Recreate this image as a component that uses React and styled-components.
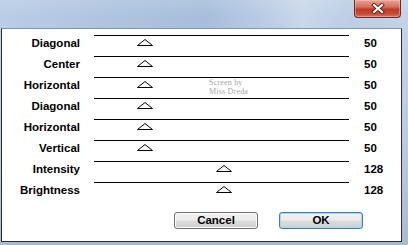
import React from "react";
import styled, { createGlobalStyle } from "styled-components";

const Global = createGlobalStyle`
  html, body { margin: 0; padding: 0; background: #ffffff; }
  body { font-family: "Liberation Sans", Arial, sans-serif; }
`;

const Window = styled.div`
  width: 408px;
  height: 245px;
  display: flex;
  flex-direction: column;
  overflow: hidden;
  background: linear-gradient(180deg, #c6d5e8 0%, #b9cbe1 60%, #a9bad0 100%);
`;

const TitleBar = styled.div`
  height: 28px;
  flex: none;
  display: flex;
  justify-content: flex-end;
  align-items: flex-start;
  padding-right: 7px;
  box-sizing: border-box;
  background:
    linear-gradient(180deg, rgba(255,255,255,0.12) 0%, rgba(255,255,255,0) 60%),
    linear-gradient(90deg, #b9cde5 0%, #afc5df 25%, #a6bedb 50%, #b5c9e2 62%, #c9d8ea 74%, #bccee5 86%, #c3d3e8 100%);
`;

const CloseButton = styled.div`
  width: 47px;
  height: 18px;
  box-sizing: border-box;
  border: 1px solid #6e2a22;
  border-top: none;
  border-radius: 0 0 4px 4px;
  background: linear-gradient(180deg, #e8a394 0%, #d7705f 40%, #c13a26 55%, #c84a33 80%, #d8745c 100%);
  display: flex;
  align-items: center;
  justify-content: center;
  box-shadow: inset 0 0 0 1px rgba(255, 200, 190, 0.45);
`;

const Frame = styled.div`
  flex: 1;
  display: flex;
  padding: 0 6px 3px 1px;
`;

const Client = styled.div`
  flex: 1;
  background: #ffffff;
  border: 1px solid #2d2d2d;
  border-top-color: #7f93ad;
  position: relative;
  display: flex;
  flex-direction: column;
  padding-top: 6px;
  font-family: "Liberation Sans", Arial, sans-serif;
  font-weight: bold;
  font-size: 11.5px;
  color: #000;
`;

const Grid = styled.div`
  display: grid;
  grid-template-columns: 78px 255px auto;
  column-gap: 14px;
  grid-auto-rows: 21px;
`;

const Label = styled.div`
  text-align: right;
  line-height: 16px;
  white-space: nowrap;
`;

const Value = styled.div`
  line-height: 16px;
  margin-left: 1px;
`;

const Track = styled.div`
  position: relative;
  border-top: 1px solid #000;
  height: 20px;
`;

const Thumb = styled.svg`
  position: absolute;
  top: 3px;
  width: 16px;
  height: 7px;
  overflow: visible;
`;

const Watermark = styled.div`
  position: absolute;
  left: 207px;
  top: 49px;
  font-family: "Liberation Serif", "Times New Roman", serif;
  font-weight: normal;
  font-size: 8px;
  line-height: 9px;
  color: #a8a8a8;
  letter-spacing: 0.2px;
`;

const Buttons = styled.div`
  display: flex;
  justify-content: flex-end;
  gap: 21px;
  padding-right: 38px;
  margin-top: 9px;
`;

const Button = styled.div`
  width: 84px;
  height: 17px;
  box-sizing: border-box;
  border-radius: 3px;
  border: 1px solid ${(p) => (p.$default ? "#3c7fb1" : "#707070")};
  background: linear-gradient(180deg, #f2f2f2 0%, #ebebeb 48%, #dddddd 52%, #cfcfcf 100%);
  box-shadow: inset 0 0 0 1px ${(p) => (p.$default ? "#a8d8f2" : "#fbfbfb")};
  display: flex;
  align-items: center;
  justify-content: center;
  font-weight: bold;
  font-size: 11.5px;
  line-height: 15px;
`;

const rows = [
  ["Diagonal", 50],
  ["Center", 50],
  ["Horizontal", 50],
  ["Diagonal", 50],
  ["Horizontal", 50],
  ["Vertical", 50],
  ["Intensity", 128],
  ["Brightness", 128],
];

export default function App() {
  return (
    <>
      <Global />
      <Window>
        <TitleBar>
          <CloseButton>
            <svg width="14" height="11" viewBox="0 0 14 11">
              <path d="M3 2 L11 9 M11 2 L3 9" stroke="#5a2018" strokeWidth="4" strokeLinecap="square" />
              <path d="M3 2 L11 9 M11 2 L3 9" stroke="#ffffff" strokeWidth="2.2" strokeLinecap="square" />
            </svg>
          </CloseButton>
        </TitleBar>
        <Frame>
          <Client>
            <Grid>
              {rows.map(([label, value], i) => (
                <React.Fragment key={i}>
                  <Label>{label}</Label>
                  <Track>
                    <Thumb
                      viewBox="0 0 16 7"
                      style={{ left: `${value - 7 + (value > 100 ? 1 : 0)}px` }}
                    >
                      <polygon points="8,0.5 15.5,6.5 0.5,6.5" fill="#fff" stroke="#000" strokeWidth="1" />
                    </Thumb>
                  </Track>
                  <Value>{value}</Value>
                </React.Fragment>
              ))}
            </Grid>
            <Watermark>
              Screen by
              <br />
              Miss Dreda
            </Watermark>
            <Buttons>
              <Button>Cancel</Button>
              <Button $default>OK</Button>
            </Buttons>
          </Client>
        </Frame>
      </Window>
    </>
  );
}
